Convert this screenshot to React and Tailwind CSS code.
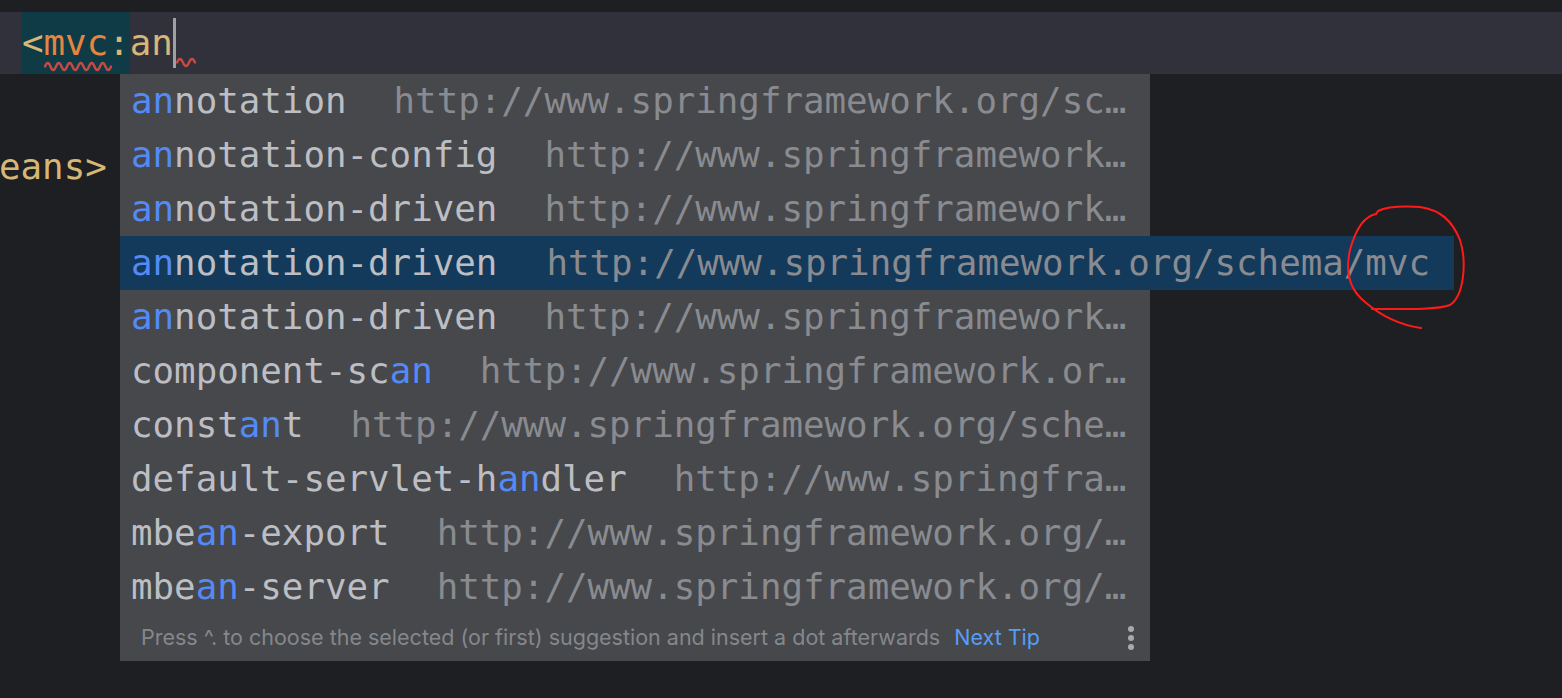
import React from "react";

const mono = { fontFamily: '"DejaVu Sans Mono", "Liberation Mono", monospace' };

const rows = [
  { pre: "", hl: "an", post: "notation", url: "http://www.springframework.org/sc…" },
  { pre: "", hl: "an", post: "notation-config", url: "http://www.springframework…" },
  { pre: "", hl: "an", post: "notation-driven", url: "http://www.springframework…" },
  { pre: "", hl: "an", post: "notation-driven", url: "http://www.springframework.org/schema/mvc", selected: true },
  { pre: "", hl: "an", post: "notation-driven", url: "http://www.springframework…" },
  { pre: "component-sc", hl: "an", post: "", url: "http://www.springframework.or…" },
  { pre: "const", hl: "an", post: "t", url: "http://www.springframework.org/sche…" },
  { pre: "default-servlet-h", hl: "an", post: "dler", url: "http://www.springfra…" },
  { pre: "mbe", hl: "an", post: "-export", url: "http://www.springframework.org/…" },
  { pre: "mbe", hl: "an", post: "-server", url: "http://www.springframework.org/…" },
];

function Squiggle({ width, period = 11 }) {
  const half = period / 2;
  const n = Math.ceil(width / half);
  let d = "M0,5.5";
  for (let i = 0; i < n; i++) {
    const x0 = i * half;
    const y = i % 2 === 0 ? -1.5 : 12.5;
    d += ` Q${x0 + half / 2},${y} ${x0 + half},5.5`;
  }
  return (
    <svg width={width} height="11" viewBox={`0 0 ${width} 11`} className="block overflow-visible">
      <path d={d} fill="none" stroke="#c94a43" strokeWidth="2.4" strokeLinecap="round" />
    </svg>
  );
}

export default function App() {
  return (
    <div className="relative w-[1562px] h-[698px] overflow-hidden bg-[#1e1f22]">
      <div className="h-[12px] bg-[#1e1f22]" />
      {/* current line */}
      <div className="h-[62px] bg-[#30313b] flex items-stretch pl-[22px] text-[35.8px]" style={mono}>
        <div className="relative flex items-center bg-[#0f3b46]">
          <span className="text-[#d5b778]">&lt;</span>
          <span className="relative text-[#e5853f]">
            mvc
            <span className="absolute left-[1px] top-[45px]">
              <Squiggle width={64} />
            </span>
          </span>
          <span className="text-[#d5b778]">:</span>
        </div>
        <div className="relative flex items-center">
          <span className="text-[#d5b778]">an</span>
          <span className="w-[3px] h-[50px] bg-[#9fa0a4]" />
          <span className="absolute left-[47px] top-[45px]">
            <Squiggle width={14} period={12} />
          </span>
        </div>
      </div>
      <div className="h-[62px]" />
      <div className="h-[62px] flex items-center text-[35.8px] text-[#d5b778] -ml-[1px]" style={mono}>
        eans&gt;
      </div>

      {/* completion popup */}
      <div className="absolute left-[120px] top-[74px] w-[1030px] bg-[#46484b] flex flex-col">
        {rows.map((r, i) => (
          <div
            key={i}
            className={
              "h-[54px] flex items-center pl-[11px] whitespace-nowrap text-[35.8px] " +
              (r.selected ? "w-[1334px] bg-[#133a5a]" : "w-[1030px]")
            }
            style={mono}
          >
            <span className="text-[#bcbec4]">
              {r.pre}
              <span className="text-[#548af7]">{r.hl}</span>
              {r.post}
            </span>
            <span className={"text-[#898b90] " + (r.selected ? "ml-[49px]" : "ml-[47px]")}>{r.url}</span>
          </div>
        ))}
        <div
          className="h-[47px] flex items-center pl-[21px] pr-[16px] text-[21.5px] whitespace-nowrap"
          style={{ fontFamily: 'Inter, "Liberation Sans", Arial, sans-serif' }}
        >
          <span className="text-[#85878b]">
            Press ^. to choose the selected (or first) suggestion and insert a dot afterwards
          </span>
          <span className="ml-[14px] text-[#589df6]">Next Tip</span>
          <span className="ml-auto flex flex-col gap-[3px] items-center">
            <span className="w-[6px] h-[6px] rounded-full bg-[#a8a9ac]" />
            <span className="w-[6px] h-[6px] rounded-full bg-[#a8a9ac]" />
            <span className="w-[6px] h-[6px] rounded-full bg-[#a8a9ac]" />
          </span>
        </div>
      </div>

      {/* hand-drawn red circle */}
      <svg className="absolute left-0 top-0 pointer-events-none" width="1562" height="698" viewBox="0 0 1562 698">
        <path
          d="M1372,309 C1400,309 1438,310 1450,305 C1464,296 1467,262 1460,240 C1452,220 1440,210 1420,207 C1402,206 1386,207 1378,211 L1376,214 C1365,216 1356,228 1350,250 C1345,272 1350,290 1365,302 C1380,315 1400,325 1421,328"
          fill="none"
          stroke="#ff1a1a"
          strokeWidth="2"
          strokeLinecap="round"
        />
      </svg>
    </div>
  );
}
